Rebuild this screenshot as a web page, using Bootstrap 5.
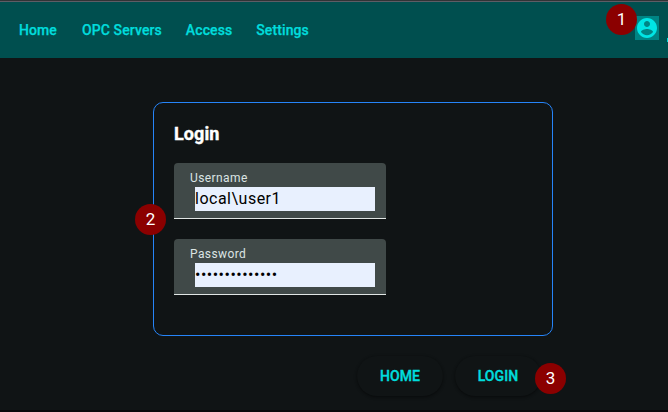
<!DOCTYPE html>
<html lang="en">
<head>
<meta charset="utf-8">
<title>Login</title>
<link href="https://cdn.jsdelivr.net/npm/bootstrap@5.3.0/dist/css/bootstrap.min.css" rel="stylesheet">
<style>
body{background:#101415;font-family:Roboto,"Liberation Sans",sans-serif;width:668px;height:412px;overflow:hidden;border-bottom:2px solid #0a080c}
.topbar{height:58px;background:#004f4f;border-top:1px solid #303436;box-shadow:inset 0 1px #5d5d66}
.topbar .nav{padding-left:19px}
.topbar .nav-link{color:#00dcdc;font-size:14px;font-weight:500;line-height:20px;letter-spacing:.1px;padding:0;margin-right:24px;-webkit-text-stroke:.25px #00dcdc}
.topbar .nav-link:first-child{margin-right:25px}
.account{width:24px;height:24px;background:#008484;margin-right:8px;margin-top:-4px}
.edge{width:1px;height:4px;background:#00dcdc;margin-top:20px}
.login-box{width:400px;height:234px;margin:44px 0 0 153px;border:1px solid #2684f8;border-radius:10px;padding:19px 20px}
.login-title{font-size:18px;line-height:24px;font-weight:700;letter-spacing:.1px;color:#fff;margin:0 0 17px;-webkit-text-stroke:.4px #fff}
.field{width:212px;height:56px;background:#404948;border-radius:4px 4px 0 0;border-bottom:1px solid #e0e5e4;padding:7px 11px 0 16px}
.field + .field{margin-top:20px}
.field label{display:block;font-size:12px;line-height:16px;letter-spacing:.4px;color:#dbe4e3}
.field input{display:block;width:180px;height:24px;margin:1px 0 0 5px;padding:0;border:0;border-radius:0;background:#e8f0fe;color:#000;font-size:16px;line-height:24px;letter-spacing:.5px}
.field input:focus{background:#e8f0fe;box-shadow:none}
.actions{margin:20px 0 0 357px;gap:12px}
.actions .btn{height:40px;border:0;border-radius:20px;background:#101415;color:#00dcdc;font-size:14px;font-weight:500;letter-spacing:.1px;line-height:20px;padding:0;width:86px;box-shadow:0 1px 2px rgba(0,0,0,.3),0 1px 3px 1px rgba(0,0,0,.15);-webkit-text-stroke:.4px #00dcdc}
.step{position:absolute;width:31px;height:31px;border-radius:50%;background:#8b0000;color:#fff;font:17px/30px Roboto,sans-serif;text-align:center}
.s1{left:606px;top:4px}.s2{left:135px;top:204px}.s3{left:535px;top:363px}
</style>
<script src="https://cdn.jsdelivr.net/npm/bootstrap@5.3.0/dist/js/bootstrap.bundle.min.js"></script>
</head>
<body class="position-relative">
<nav class="topbar d-flex align-items-center">
  <div class="nav flex-grow-1">
    <a class="nav-link" href="#">Home</a>
    <a class="nav-link" href="#">OPC Servers</a>
    <a class="nav-link" href="#">Access</a>
    <a class="nav-link" href="#">Settings</a>
  </div>
  <div class="account d-flex">
    <svg width="24" height="24" viewBox="0 0 24 24" fill="#00e5e5"><path d="M12 2C6.480 2 2 6.480 2 12s4.480 10 10 10 10-4.480 10-10S17.520 2 12 2zm0 3c1.660 0 3 1.340 3 3s-1.340 3-3 3-3-1.340-3-3 1.340-3 3-3zm0 14.200c-2.500 0-4.710-1.280-6-3.220.03-1.990 4-3.080 6-3.080 1.990 0 5.970 1.090 6 3.080-1.290 1.940-3.500 3.220-6 3.220z"/></svg>
  </div>
  <span class="edge"></span>
</nav>
<main>
  <form class="login-box">
    <h1 class="login-title">Login</h1>
    <div class="field"><label for="u">Username</label><input class="form-control" id="u" type="text" value="local\user1"></div>
    <div class="field"><label for="p">Password</label><input class="form-control" id="p" type="password" value="12345678901234"></div>
  </form>
  <div class="actions d-flex">
    <button class="btn" type="button">HOME</button>
    <button class="btn" type="button">LOGIN</button>
  </div>
</main>
<span class="step s1">1</span><span class="step s2">2</span><span class="step s3">3</span>
</body>
</html>
